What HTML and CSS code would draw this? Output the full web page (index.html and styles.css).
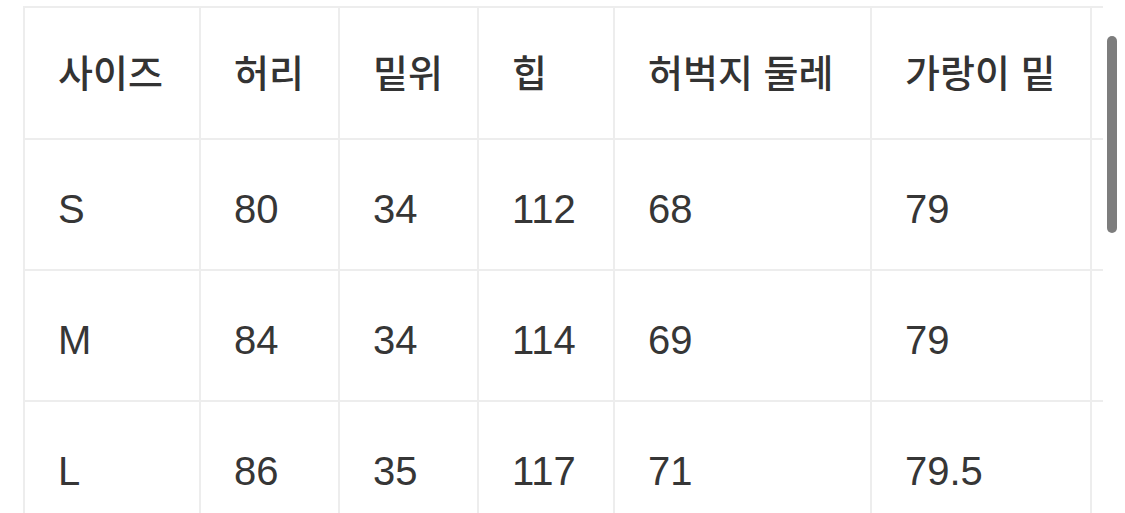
FILE: index.html
```html
<!DOCTYPE html>
<html lang="ko">
<head>
<meta charset="utf-8">
<title>사이즈 표</title>
<link rel="stylesheet" href="styles.css">
</head>
<body>
<div class="viewport">
  <div class="clip">
    <table class="size-table">
      <colgroup>
        <col class="c1"><col class="c2"><col class="c3"><col class="c4"><col class="c5"><col class="c6"><col class="c7">
      </colgroup>
      <thead>
        <tr class="head">
          <th>사이즈</th><th>허리</th><th>밑위</th><th>힙</th><th>허벅지 둘레</th><th>가랑이 밑</th><th></th>
        </tr>
      </thead>
      <tbody>
        <tr><td>S</td><td>80</td><td>34</td><td>112</td><td>68</td><td>79</td><td></td></tr>
        <tr><td>M</td><td>84</td><td>34</td><td>114</td><td>69</td><td>79</td><td></td></tr>
        <tr><td>L</td><td>86</td><td>35</td><td>117</td><td>71</td><td>79.5</td><td></td></tr>
      </tbody>
    </table>
  </div>
  <div class="scrollbar"></div>
</div>
</body>
</html>
```

FILE: styles.css
```css
html, body {
  margin: 0;
  padding: 0;
  background: #ffffff;
}

.viewport {
  position: relative;
  width: 1125px;
  height: 513px;
  overflow: hidden;
  display: flex;
}

.clip {
  width: 1103px;
  height: 513px;
  overflow: hidden;
  padding-top: 6px;
  box-sizing: border-box;
}

.size-table {
  border-collapse: collapse;
  table-layout: fixed;
  width: 1289px;
  margin-left: 23px;
  color: #363636;
}

.c1 { width: 176px; }
.c2 { width: 139px; }
.c3 { width: 139px; }
.c4 { width: 136px; }
.c5 { width: 257px; }
.c6 { width: 220px; }
.c7 { width: 222px; }

.size-table th,
.size-table td {
  border: 2px solid #ededed;
  padding: 0 0 0 33px;
  text-align: left;
  vertical-align: middle;
  white-space: nowrap;
}

.size-table th {
  height: 124px;
  font-family: "Noto Sans CJK KR", "Noto Sans", sans-serif;
  font-size: 38px;
  font-weight: 500;
  color: #333333;
  padding-top: 0;
  padding-bottom: 6px;
}

.size-table td {
  height: 131px;
  font-family: "Liberation Sans", Arial, sans-serif;
  font-size: 40px;
  font-weight: 400;
  padding-top: 10px;
  box-sizing: border-box;
}

.scrollbar {
  position: absolute;
  left: 1107px;
  top: 36px;
  width: 10px;
  height: 197px;
  border-radius: 5px;
  background: #7d7d7d;
}
```
